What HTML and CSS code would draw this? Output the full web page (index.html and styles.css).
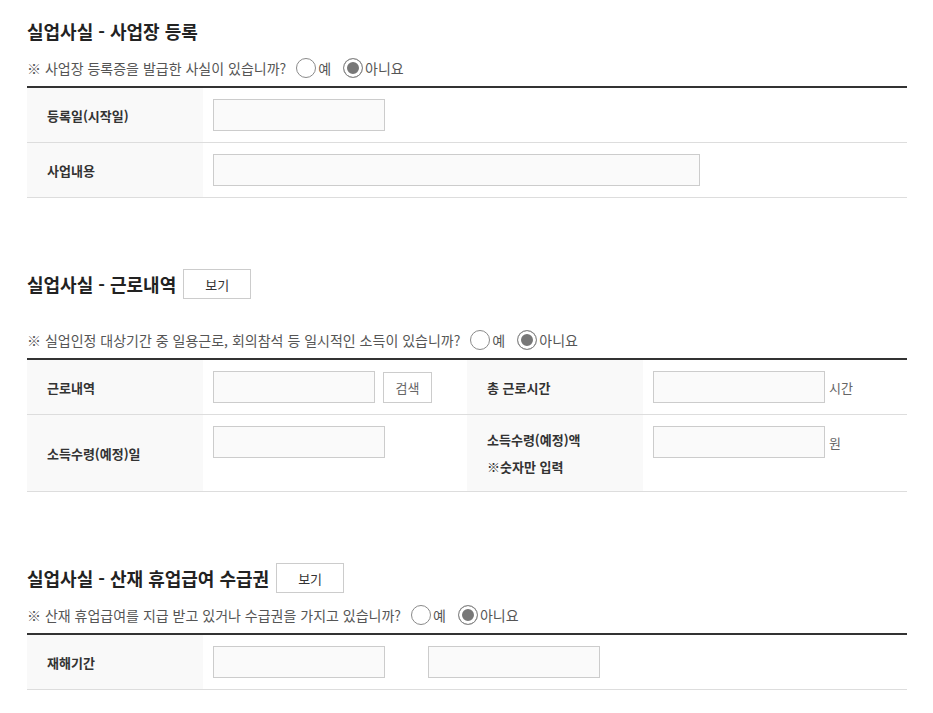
FILE: index.html
```html
<!DOCTYPE html>
<html lang="ko">
<head>
  <meta charset="UTF-8">
  <title>실업사실 입력</title>
  <link rel="stylesheet" href="styles.css">
</head>
<body>

  <div class="wrap">

    <div class="section">
      <div class="sec-title">
        <h3>실업사실 - 사업장 등록</h3>
      </div>
      <p class="notice">※ 사업장 등록증을 발급한 사실이 있습니까?
        <label class="opt"><input type="radio" name="bizReg"> 예</label>
        <label class="opt"><input type="radio" name="bizReg" checked> 아니요</label>
      </p>
      <table class="form-table">
        <colgroup><col class="c-th"><col></colgroup>
        <tr>
          <th>등록일(시작일)</th>
          <td><input type="text" class="txt"></td>
        </tr>
        <tr>
          <th>사업내용</th>
          <td><input type="text" class="txt wide"></td>
        </tr>
      </table>
    </div>

    <div class="section">
      <div class="sec-title">
        <h3>실업사실 - 근로내역</h3>
        <button type="button" class="btn-view">보기</button>
      </div>
      <p class="notice gap-top">※ 실업인정 대상기간 중 일용근로, 회의참석 등 일시적인 소득이 있습니까?
        <label class="opt"><input type="radio" name="work"> 예</label>
        <label class="opt"><input type="radio" name="work" checked> 아니요</label>
      </p>
      <table class="form-table">
        <colgroup><col class="c-th"><col class="c-td"><col class="c-th"><col class="c-td"></colgroup>
        <tr>
          <th>근로내역</th>
          <td>
            <div class="field">
              <input type="text" class="txt short">
              <button type="button" class="btn-search">검색</button>
            </div>
          </td>
          <th>총 근로시간</th>
          <td>
            <div class="field">
              <input type="text" class="txt">
              <span class="unit">시간</span>
            </div>
          </td>
        </tr>
        <tr>
          <th>소득수령(예정)일</th>
          <td><input type="text" class="txt"></td>
          <th>소득수령(예정)액<br>※숫자만 입력</th>
          <td>
            <div class="field">
              <input type="text" class="txt">
              <span class="unit">원</span>
            </div>
          </td>
        </tr>
      </table>
    </div>

    <div class="section">
      <div class="sec-title">
        <h3>실업사실 - 산재 휴업급여 수급권</h3>
        <button type="button" class="btn-view">보기</button>
      </div>
      <p class="notice">※ 산재 휴업급여를 지급 받고 있거나 수급권을 가지고 있습니까?
        <label class="opt"><input type="radio" name="injury"> 예</label>
        <label class="opt"><input type="radio" name="injury" checked> 아니요</label>
      </p>
      <table class="form-table">
        <colgroup><col class="c-th"><col></colgroup>
        <tr>
          <th>재해기간</th>
          <td>
            <div class="field period">
              <input type="text" class="txt">
              <input type="text" class="txt">
            </div>
          </td>
        </tr>
      </table>
    </div>

  </div>

</body>
</html>
```

FILE: styles.css
```css
body {
  margin: 0;
  font-family: "Noto Sans CJK KR", "Noto Sans", sans-serif;
  font-size: 13px;
  color: #333;
  background: #fff;
}
.wrap {
  width: 880px;
  padding: 16px 0 0 27px;
}
.section {
  margin-bottom: 71px;
}
.section:last-child {
  margin-bottom: 0;
}
.sec-title {
  display: flex;
  align-items: center;
  gap: 7px;
  height: 30px;
}
.sec-title h3 {
  margin: 0;
  font-size: 18px;
  font-weight: bold;
  color: #222;
}
.btn-view {
  width: 68px;
  height: 30px;
  border: 1px solid #ccc;
  background: #fff;
  font-family: inherit;
  font-size: 13px;
  color: #333;
  padding: 0;
}
.notice {
  display: flex;
  align-items: center;
  margin: 10px 0 6px;
  height: 24px;
  font-size: 14px;
  color: #555;
}
.notice.gap-top {
  margin-top: 29px;
}
.opt {
  display: inline-flex;
  align-items: center;
  gap: 2px;
  margin-left: 10px;
}
.opt + .opt {
  margin-left: 12px;
}
.opt input {
  appearance: none;
  -webkit-appearance: none;
  width: 20px;
  height: 20px;
  margin: 0;
  border: 1px solid #8a8a8a;
  border-radius: 50%;
  background: #fff;
}
.opt input:checked {
  background: #777;
  box-shadow: inset 0 0 0 3px #fff;
}
.form-table {
  width: 880px;
  border-collapse: collapse;
  border-top: 2px solid #333;
  table-layout: fixed;
}
.c-th {
  width: 176px;
}
.c-td {
  width: 264px;
}
.form-table th {
  background: #f9f9f9;
  text-align: left;
  padding: 11px 20px;
  font-weight: bold;
  line-height: 27px;
  color: #333;
  border-bottom: 1px solid #ddd;
}
.form-table td {
  padding: 11px 10px;
  vertical-align: top;
  border-bottom: 1px solid #ddd;
}
.field {
  display: flex;
  align-items: center;
  gap: 4px;
}
.field.period {
  gap: 43px;
}
.txt {
  box-sizing: border-box;
  width: 172px;
  height: 32px;
  margin: 0;
  border: 1px solid #ccc;
  background: #fafafa;
  display: block;
}
.txt.short {
  width: 162px;
}
.txt.wide {
  width: 487px;
}
.btn-search {
  width: 49px;
  height: 31px;
  margin-left: 4px;
  border: 1px solid #ccc;
  background: #fff;
  font-family: inherit;
  font-size: 13px;
  color: #666;
  padding: 0;
}
.unit {
  color: #666;
}
```
